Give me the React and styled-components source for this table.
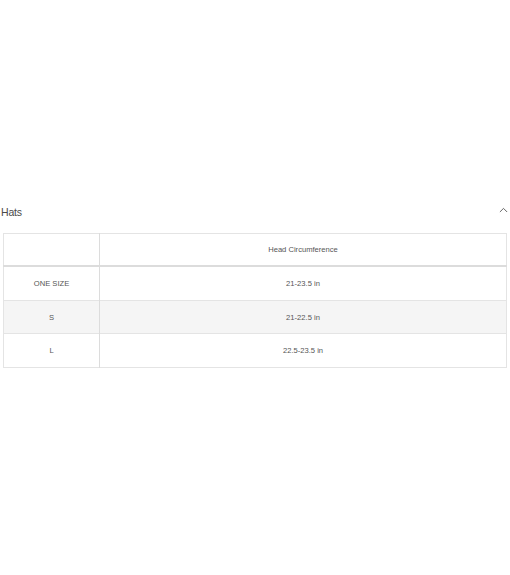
import styled, { createGlobalStyle } from "styled-components";

const GlobalStyle = createGlobalStyle`
  html, body {
    margin: 0;
    padding: 0;
    background: #ffffff;
  }
  body {
    font-family: "Liberation Sans", Arial, sans-serif;
    color: #333;
  }
`;

const rows = [
  { size: "ONE SIZE", value: "21-23.5 in" },
  { size: "S", value: "21-22.5 in" },
  { size: "L", value: "22.5-23.5 in" },
];

export default function App() {
  return (
    <>
      <GlobalStyle />
      <Page>
        <Section>
          <Header>
            <Title>Hats</Title>
            <Chevron viewBox="0 0 10 6" aria-hidden="true">
              <path d="M1 5.2 L5 1.2 L9 5.2" />
            </Chevron>
          </Header>
          <Table>
            <thead>
              <tr>
                <HeadCell $first />
                <HeadCell>Head Circumference</HeadCell>
              </tr>
            </thead>
            <tbody>
              {rows.map((r, i) => (
                <Row key={r.size} $shaded={i % 2 === 1}>
                  <Cell $first>{r.size}</Cell>
                  <Cell>{r.value}</Cell>
                </Row>
              ))}
            </tbody>
          </Table>
        </Section>
      </Page>
    </>
  );
}

const Page = styled.div`
  width: 510px;
  height: 575px;
  padding-top: 203px;
  box-sizing: border-box;
`;

const Section = styled.section`
  display: flex;
  flex-direction: column;
`;

const Header = styled.div`
  display: flex;
  align-items: center;
  justify-content: space-between;
  height: 17px;
  padding: 0 2px 0 1px;
  margin-bottom: 13px;
`;

const Title = styled.span`
  font-size: 10.5px;
  color: #4a4a4a;
  letter-spacing: -0.2px;
`;

const Chevron = styled.svg`
  width: 9px;
  height: 6px;
  margin-top: -4px;
  fill: none;
  stroke: #555;
  stroke-width: 1;
`;

const Table = styled.table`
  margin-left: 3px;
  width: 504px;
  border-collapse: collapse;
  table-layout: fixed;
  border: 1px solid #e4e4e4;
`;

const HeadCell = styled.th`
  width: ${(p) => (p.$first ? "95px" : "auto")};
  height: 31px;
  padding: 0;
  font-weight: normal;
  font-size: 7.6px;
  color: #555;
  text-align: center;
  border-bottom: 2px solid #dcdcdc;
  border-left: ${(p) => (p.$first ? "none" : "1px solid #dcdcdc")};
`;

const Row = styled.tr`
  background: ${(p) => (p.$shaded ? "#f5f5f5" : "#ffffff")};
  border-bottom: 1px solid #e4e4e4;
`;

const Cell = styled.td`
  height: 32.7px;
  padding: 0;
  font-size: 7.6px;
  color: #555;
  text-align: center;
  border-left: ${(p) => (p.$first ? "none" : "1px solid #dcdcdc")};
`;
